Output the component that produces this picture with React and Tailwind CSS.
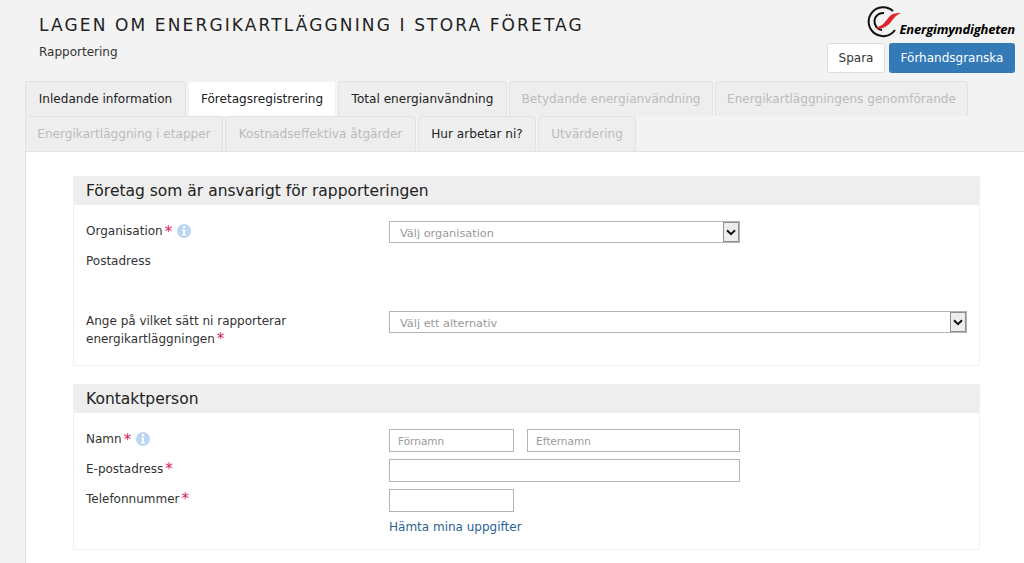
import React from "react";

const FONT = "font-['DejaVu_Sans',Verdana,sans-serif]";

const TABS = [
  [
    { label: "Inledande information", w: "w-[161px]" },
    { label: "Företagsregistrering", w: "w-[148px]", active: true },
    { label: "Total energianvändning", w: "w-[169px]" },
    { label: "Betydande energianvändning", w: "w-[204px]", disabled: true },
    { label: "Energikartläggningens genomförande", w: "w-[253px]", disabled: true },
  ],
  [
    { label: "Energikartläggning i etapper", w: "w-[198px]", disabled: true },
    { label: "Kostnadseffektiva åtgärder", w: "w-[191px]", disabled: true },
    { label: "Hur arbetar ni?", w: "w-[118px]" },
    { label: "Utvärdering", w: "w-[98px]", disabled: true },
  ],
];

function Logo() {
  return (
    <div className="flex h-[36px] w-[150px] items-end justify-end relative">
      <svg width="40" height="36" viewBox="0 0 40 36" className="absolute left-0 top-0">
        <path d="M28 8 A14.5 14.5 0 1 0 30 27" fill="none" stroke="#111" strokeWidth="2" />
        <path d="M19 10 A8.5 8.5 0 0 0 17 27" fill="none" stroke="#111" strokeWidth="2" />
        <path d="M10 25 C19 23 21 17 25 13 C28 10 32 10 36 10 C31 12 29 15 26 19 C22 24 16 27 10 25 Z" fill="#e0252b" />
      </svg>
      <span className="font-['Open_Sans',sans-serif] text-[13px] font-bold italic leading-[18px] tracking-[-0.2px] text-black mb-[1px]">
        Energimyndigheten
      </span>
    </div>
  );
}

function InfoIcon() {
  return (
    <span className="ml-[5px] inline-flex h-[14px] w-[14px] items-center justify-center rounded-full bg-[#bcd6f2]">
      <svg width="6" height="10" viewBox="0 0 6 10">
        <rect x="2" y="0" width="2.2" height="2.2" fill="#fff" />
        <path d="M1 3.6 H4 V8.4 H5.2 V9.6 H1 V8.4 H2 V4.8 H1 Z" fill="#fff" />
      </svg>
    </span>
  );
}

function Req() {
  return <span className="relative top-[1px] ml-[2px] text-[15px] leading-[16px] text-[#d81b60]">*</span>;
}

function FakeSelect({ placeholder, width }) {
  return (
    <div className={`flex h-[22px] items-stretch border border-[#b4b4b4] bg-white ${width}`}>
      <span className="flex-1 pl-[10px] text-[11.3px] leading-[24px] text-[#9a9a9a]">{placeholder}</span>
      <span className="flex w-[16px] items-center justify-center border border-[#8f8f8f] bg-[#ededed]">
        <svg width="10" height="7" viewBox="0 0 10 7">
          <path d="M1 1.2 L5 5.2 L9 1.2" fill="none" stroke="#111" strokeWidth="2" />
        </svg>
      </span>
    </div>
  );
}

function Input({ placeholder, width }) {
  return (
    <div className={`h-[23px] border border-[#b4b4b4] bg-white pl-[8px] text-[10.5px] leading-[22px] text-[#9a9a9a] ${width}`}>
      {placeholder}
    </div>
  );
}

function Card({ title, children, height }) {
  return (
    <section className={`w-[907px] border border-[#f1f1f1] ${height}`}>
      <h2 className="h-[28px] bg-[#eeeeee] pl-[12px] text-[15.5px] leading-[28px] font-normal text-[#222]">{title}</h2>
      {children}
    </section>
  );
}

function Row({ label, className, children }) {
  return (
    <div className={`flex ${className}`}>
      <div className="w-[315px] shrink-0 pl-[12px] pt-[1px] text-[#333]">{label}</div>
      {children}
    </div>
  );
}

export default function App() {
  return (
    <div className={`${FONT} h-[563px] w-[1024px] overflow-hidden bg-[#f3f3f3] text-[12px] leading-[18px]`}>
      {/* Header */}
      <header className="flex h-[81px] justify-between pl-[39px] pr-[9px]">
        <div>
          <h1 className="mt-[14px] text-[17px] leading-[22px] font-normal tracking-[2.13px] text-[#222]">
            LAGEN OM ENERGIKARTLÄGGNING I STORA FÖRETAG
          </h1>
          <p className="mt-[7px] text-[#333]">Rapportering</p>
        </div>
        <div className="flex flex-col items-end pt-[3px]">
          <Logo />
          <div className="mt-[4px] flex gap-[4px]">
            <button className="h-[30px] w-[58px] rounded-[3px] border border-[#dddddd] bg-white text-[#333]">Spara</button>
            <button className="h-[30px] w-[126px] rounded-[3px] bg-[#337ab7] text-[#fff]">Förhandsgranska</button>
          </div>
        </div>
      </header>

      {/* Tabs */}
      <nav className="ml-[25px]">
        {TABS.map((row, i) => (
          <div key={i} className="flex h-[35px] gap-[2px]">
            {row.map((tab) => (
              <div
                key={tab.label}
                className={`${tab.w} rounded-t-[3px] border border-b-0 text-center text-[12.1px] leading-[34px] ${
                  tab.active
                    ? "border-[#f3f3f3] bg-white text-[#222]"
                    : tab.disabled
                    ? "border-[#e2e2e2] bg-[#eeeeee] text-[#bcbcbc]"
                    : "border-[#e2e2e2] bg-[#eeeeee] text-[#222]"
                }`}
              >
                {tab.label}
              </div>
            ))}
          </div>
        ))}
      </nav>

      {/* Content */}
      <main className="ml-[25px] h-[412px] border-t border-l border-[#e2e2e2] bg-white pl-[47px] pt-[24px]">
        <Card title="Företag som är ansvarigt för rapporteringen" height="h-[190px]">
          <Row label={<span className="flex items-center">Organisation<Req /><InfoIcon /></span>} className="mt-[16px]">
            <FakeSelect placeholder="Välj organisation" width="w-[351px]" />
          </Row>
          <Row label="Postadress" className="mt-[8px] h-[50px]" />
          <Row
            label={<>Ange på vilket sätt ni rapporterar<br />energikartläggningen<Req /></>}
            className="mt-[10px]"
          >
            <FakeSelect placeholder="Välj ett alternativ" width="w-[578px]" />
          </Row>
        </Card>

        <div className="mt-[18px]">
          <Card title="Kontaktperson" height="h-[166px]">
            <Row label={<span className="flex items-center">Namn<Req /><InfoIcon /></span>} className="mt-[16px]">
              <div className="flex gap-[13px]">
                <Input placeholder="Förnamn" width="w-[125px]" />
                <Input placeholder="Efternamn" width="w-[213px]" />
              </div>
            </Row>
            <Row label={<>E-postadress<Req /></>} className="mt-[7px]">
              <Input width="w-[351px]" />
            </Row>
            <Row label={<>Telefonnummer<Req /></>} className="mt-[7px]">
              <Input width="w-[125px]" />
            </Row>
            <Row label="" className="mt-[6px]">
              <a className="text-[#2a6496]">Hämta mina uppgifter</a>
            </Row>
          </Card>
        </div>
      </main>
    </div>
  );
}
